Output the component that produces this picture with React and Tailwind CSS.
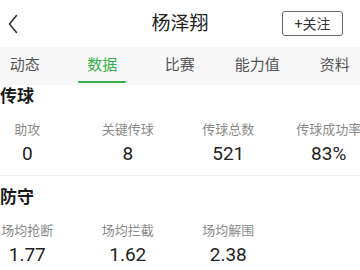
import React from "react";

const FONT = { fontFamily: 'Roboto, "Noto Sans CJK SC", "Noto Sans", sans-serif' };

const tabs = ["动态", "数据", "比赛", "能力值", "资料"];

const sections = [
  {
    title: "传球",
    stats: [
      { label: "助攻", value: "0" },
      { label: "关键传球", value: "8" },
      { label: "传球总数", value: "521" },
      { label: "传球成功率", value: "83%" },
    ],
  },
  {
    title: "防守",
    stats: [
      { label: "场均抢断", value: "1.77" },
      { label: "场均拦截", value: "1.62" },
      { label: "场均解围", value: "2.38" },
    ],
  },
];

const StatSection = ({ title, stats, first }) => (
  <div className={first ? "pb-[10px] border-b border-[#eeeeee]" : "pt-[10px]"}>
    <div className="h-[22px] flex items-center text-[17px] font-bold text-[#1a1a1a] leading-none">
      {title}
    </div>
    <div className="flex ml-[-23px] mt-[13px]">
      {stats.map((s) => (
        <div key={s.label} className="w-[100.5px] shrink-0 flex flex-col items-center">
          <div className="h-[18px] flex items-center text-[13px] text-[#8a8a8a] whitespace-nowrap leading-none">
            {s.label}
          </div>
          <div className="h-[24px] mt-[3px] flex items-center text-[19px] text-[#222] leading-none">
            {s.value}
          </div>
        </div>
      ))}
    </div>
  </div>
);

export default function App() {
  const active = "数据";
  return (
    <div className="w-[360px] h-[270px] bg-white overflow-hidden" style={FONT}>
      {/* header */}
      <div className="h-[47px] grid grid-cols-[1fr_auto_1fr] items-center">
        <div className="pl-[8px] flex items-center">
          <svg width="10" height="20" viewBox="0 0 10 20" fill="none">
            <path d="M8.5 1.5 L1.5 10 L8.5 18.5" stroke="#333" strokeWidth="1.6" strokeLinecap="round" strokeLinejoin="round" />
          </svg>
        </div>
        <div className="text-[19px] text-[#222] leading-none">杨泽翔</div>
        <div className="flex justify-end pr-[17px]">
          <button className="w-[61px] h-[25px] border border-[#666] rounded-[3px] text-[14px] text-[#333] leading-none flex items-center justify-center">
            +关注
          </button>
        </div>
      </div>

      {/* tabs */}
      <div className="h-[38px] bg-[#f7f7f7] flex ml-[-14px]">
        {tabs.map((t) => (
          <div key={t} className="w-[77.5px] shrink-0 h-full relative flex items-center justify-center">
            <span className={`text-[15px] leading-none pb-[2px] ${t === active ? "text-[#36b04a]" : "text-[#555]"}`}>
              {t}
            </span>
            {t === active && (
              <span className="absolute bottom-[2px] left-1/2 -translate-x-1/2 w-[48px] h-[2px] bg-[#36b04a] rounded-full" />
            )}
          </div>
        ))}
      </div>

      {/* content */}
      {sections.map((sec, i) => (
        <StatSection key={sec.title} title={sec.title} stats={sec.stats} first={i === 0} />
      ))}
    </div>
  );
}
